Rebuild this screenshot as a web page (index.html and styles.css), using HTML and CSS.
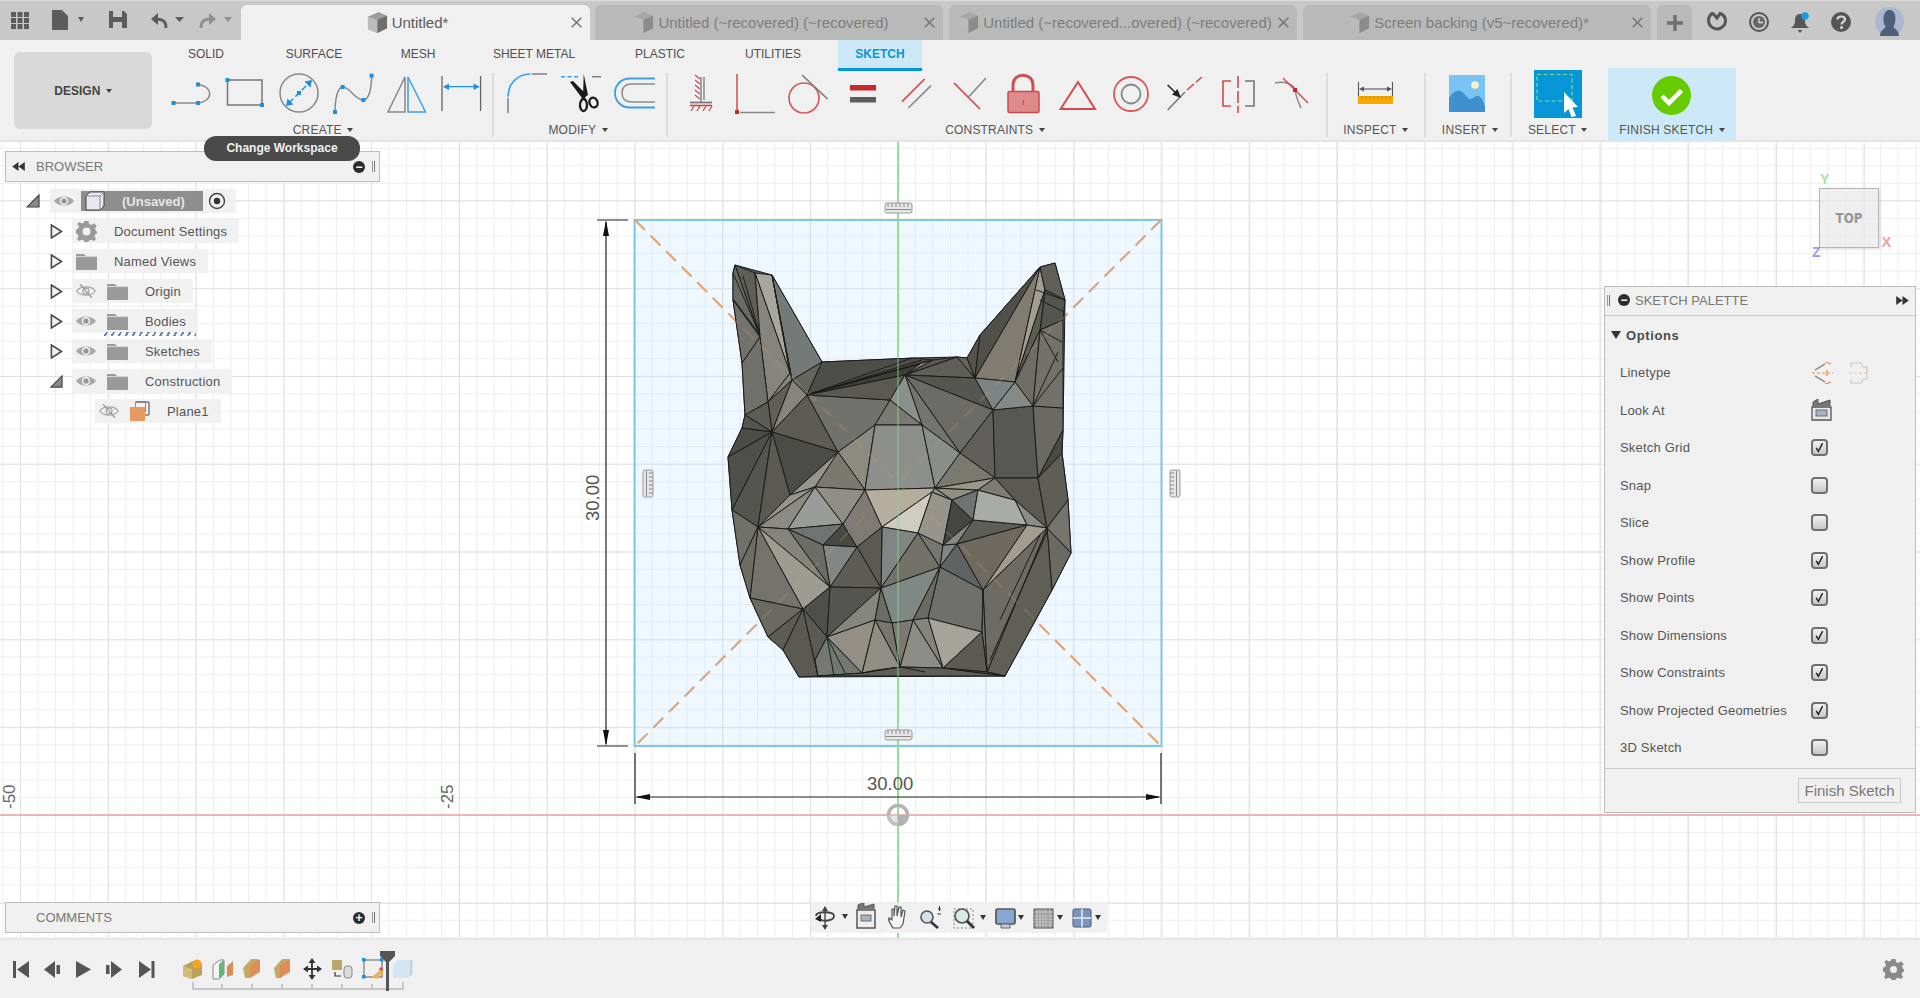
FILE: index.html
```html
<!DOCTYPE html>
<html lang="en">
<head>
  <meta charset="UTF-8">
  <title>Fusion 360 - Untitled*</title>
  <link rel="stylesheet" href="styles.css">
</head>
<body>
  <!-- shared icons -->
  <svg class="sprite" aria-hidden="true">
    <symbol id="eye" viewBox="0 0 20 14">
      <path d="M0 7C4 1 16 1 20 7C16 13 4 13 0 7Z" fill="#a8a8a8"/>
      <circle cx="10" cy="7" r="4.2" fill="#eee"/>
      <circle cx="10" cy="7" r="2.6" fill="#949494"/>
    </symbol>
    <symbol id="eye-off" viewBox="0 0 20 14">
      <path d="M0.8 7C4 1.5 16 1.5 19.2 7C16 12.5 4 12.5 0.8 7Z" fill="none" stroke="#a8a8a8" stroke-width="1.3"/>
      <circle cx="10" cy="7" r="3" fill="none" stroke="#a8a8a8" stroke-width="1.3"/>
      <path d="M4 0L16 14" stroke="#999" stroke-width="1.2"/>
    </symbol>
    <symbol id="folder" viewBox="0 0 21 17">
      <path d="M0 1H8L10 3H21V17H0Z" fill="#9a9a9a"/>
      <path d="M0 3.6H21" stroke="#eee" stroke-width="0.8"/>
    </symbol>
    <symbol id="tick" viewBox="0 0 17 17">
      <path d="M4.2 9L7 13.500L12.600 2.800" fill="none" stroke="#1c1c1c" stroke-width="1.800"/>
    </symbol>
    <symbol id="arrow-closed" viewBox="0 0 14 16">
      <path d="M1.5 1L12.5 8L1.5 15Z" fill="#f2f2f2" stroke="#4a4a4a" stroke-width="1.700"/>
    </symbol>
    <symbol id="arrow-open" viewBox="0 0 14 14">
      <path d="M13 1V13H1Z" fill="#8a8a8a" stroke="#444" stroke-width="1.2"/>
    </symbol>
    <symbol id="cube" viewBox="0 0 22 24">
      <path d="M1 6L12 1L21 5V18L11 23L1 19Z" fill="#9c9c9c"/>
      <path d="M1 6L11 9V23L1 19Z" fill="#bdbdbd"/>
      <path d="M11 9L21 5V18L11 23Z" fill="#6f6f6f"/>
    </symbol>
    <symbol id="cross" viewBox="0 0 11 11">
      <path d="M0.700 0.700L10.300 10.300M10.300 0.700L0.700 10.300" stroke="#777" stroke-width="1.600"/>
    </symbol>
  </svg>

  <header class="tabbar">
    <svg class="quick-icons" viewBox="0 5 241 35">
      <g fill="#5c5c5c">
        <rect x="11" y="12" width="5" height="5"/><rect x="17.500" y="12" width="5" height="5"/><rect x="24" y="12" width="5" height="5"/>
        <rect x="11" y="18" width="5" height="5"/><rect x="17.500" y="18" width="5" height="5"/><rect x="24" y="18" width="5" height="5"/>
        <rect x="11" y="24" width="5" height="5"/><rect x="17.500" y="24" width="5" height="5"/><rect x="24" y="24" width="5" height="5"/>
        <path d="M52 10H62L68 16V30H52Z"/>
        <path d="M78 17H84L81 22Z"/>
        <path d="M109 11H124L127 14V28H109ZM113 11V17H122V11ZM113 22V28H122V22Z" fill-rule="evenodd"/>
        <path d="M175 17H184L179.500 22Z"/>
      </g>
      <path d="M166 28C166 20 162 19 153 19" fill="none" stroke="#5c5c5c" stroke-width="3"/>
      <path d="M158 13L151 19L158 25Z" fill="#5c5c5c"/>
      <path d="M201 28C201 20 205 19 213 19" fill="none" stroke="#8f8f8f" stroke-width="3"/>
      <path d="M209 13L216 19L209 25Z" fill="#8f8f8f"/>
      <path d="M224 17H232L228 22Z" fill="#8f8f8f"/>
    </svg>
    <div class="doc-tab doc-tab-active">
      <svg class="tab-cube"><use href="#cube"/></svg>
      <span>Untitled*</span>
      <svg class="tab-close"><use href="#cross"/></svg>
    </div>
    <div class="doc-tab">
      <svg class="tab-cube"><use href="#cube"/></svg>
      <span>Untitled (~recovered) (~recovered)</span>
      <svg class="tab-close"><use href="#cross"/></svg>
    </div>
    <div class="doc-tab">
      <svg class="tab-cube"><use href="#cube"/></svg>
      <span>Untitled (~recovered...overed) (~recovered)</span>
      <svg class="tab-close"><use href="#cross"/></svg>
    </div>
    <div class="doc-tab">
      <svg class="tab-cube"><use href="#cube"/></svg>
      <span>Screen backing (v5~recovered)*</span>
      <svg class="tab-close"><use href="#cross"/></svg>
    </div>
    <div class="new-tab">
      <svg viewBox="0 0 18 18"><path d="M9 1V17M1 9H17" stroke="#6f6f6f" stroke-width="3.400"/></svg>
    </div>
    <svg class="account-icons" viewBox="1696 0 224 40">
      <path d="M1711 12.500A8.500 8.500 0 1 0 1724.500 20C1724.500 16 1722 13.500 1719 12.500L1716 17L1712.500 13Z" fill="none" stroke="#555" stroke-width="3"/>
      <circle cx="1758" cy="21" r="9" fill="none" stroke="#555" stroke-width="2"/>
      <circle cx="1758" cy="21" r="6" fill="#666"/>
      <path d="M1758 17V21.500H1762" fill="none" stroke="#ddd" stroke-width="1.300"/>
      <path d="M1799 13C1794 13 1794 18 1794 21C1794 24 1791 26 1790 27H1808C1807 26 1804 24 1804 21C1804 18 1804 13 1799 13ZM1796.500 29H1801.500L1799 32Z" fill="#555"/>
      <circle cx="1804" cy="15" r="3.800" fill="#1d9be0"/>
      <circle cx="1840" cy="21" r="10" fill="#555"/>
      <path d="M1836.500 18.500C1836.500 14.500 1844 14.500 1844 18.500C1844 21 1840.500 20.500 1840.500 23.500" fill="none" stroke="#d8d8d8" stroke-width="2.200"/>
      <circle cx="1840.500" cy="26.500" r="1.500" fill="#d8d8d8"/>
      <ellipse cx="1888.500" cy="20.500" rx="14.500" ry="14.500" fill="#a9b8d0"/>
      <path d="M1879 35C1879 29 1884 28 1884.500 25.500C1881 20 1882 9 1888.500 9C1895 9 1896 20 1892.500 25.500C1893 28 1898 29 1898 35Z" fill="#4f5f78"/>
    </svg>
  </header>

  <section class="ribbon">
    <button class="design-btn">DESIGN <i class="caret"></i></button>
    <div class="ribbon-main">
      <nav class="ribbon-tabs">
        <span>SOLID</span><span>SURFACE</span><span>MESH</span><span>SHEET METAL</span><span>PLASTIC</span><span>UTILITIES</span><span class="ribbon-tab-active">SKETCH</span>
      </nav>
      <div class="ribbon-groups">
        <div class="group group-sep">
          <div class="tools">
            <svg class="tool" viewBox="0 0 54 48">
              <path d="M9.500 33H34M34 14.500A13 9.300 0 0 1 34 33" fill="none" stroke="#8a8a8a" stroke-width="1.500"/>
              <g fill="#1d8fe0"><rect x="7.500" y="31" width="4" height="4"/><rect x="32" y="31" width="4" height="4"/><rect x="32" y="12.500" width="4" height="4"/></g>
            </svg>
            <svg class="tool" viewBox="0 0 54 48">
              <rect x="9.500" y="10" width="34.500" height="25" fill="none" stroke="#777" stroke-width="1.500"/>
              <g fill="#1d8fe0"><rect x="7.500" y="8" width="4" height="4"/><rect x="42" y="33" width="4" height="4"/></g>
            </svg>
            <svg class="tool" viewBox="0 0 54 48">
              <ellipse cx="27" cy="23" rx="19" ry="19" fill="none" stroke="#888" stroke-width="1.500"/>
              <path d="M17 33L37 13" stroke="#1d8fe0" stroke-width="1.500" stroke-dasharray="6 3"/>
              <path d="M14 36L15.500 28.500L21.500 34.500ZM40 10L38.500 17.500L32.500 11.500Z" fill="#1d8fe0"/>
              <rect x="25" y="21" width="4" height="4" fill="#1d8fe0"/>
            </svg>
            <svg class="tool" viewBox="0 0 54 48">
              <path d="M9 42C9 28 12 17 16.600 17C24 17 29 30 37.400 30C43 30 45.600 18 45.600 5.700" fill="none" stroke="#888" stroke-width="1.500"/>
              <g fill="#1d8fe0"><rect x="7" y="40" width="4" height="4"/><rect x="14.600" y="15" width="4" height="4"/><rect x="35.400" y="28" width="4" height="4"/><rect x="43.600" y="3.700" width="4" height="4"/></g>
            </svg>
            <svg class="tool" viewBox="0 0 54 48">
              <path d="M25 7L8 42H25Z" fill="none" stroke="#888" stroke-width="1.500"/>
              <path d="M28 7L45.500 42H28Z" fill="none" stroke="#3a9fe6" stroke-width="1.500"/>
            </svg>
            <svg class="tool" viewBox="0 0 54 48">
              <path d="M8 6V41M46.600 6V41" stroke="#666" stroke-width="1.300"/>
              <path d="M10 16.700H44.600" stroke="#1d8fe0" stroke-width="1.300"/>
              <path d="M9 16.700L15 13.500V20ZM45.600 16.700L39.600 13.500V20Z" fill="#1d8fe0"/>
            </svg>
          </div>
          <div class="group-label">CREATE <i class="caret"></i></div>
        </div>
        <div class="group group-sep">
          <div class="tools">
            <svg class="tool" viewBox="0 0 54 48">
              <path d="M8 26.700C8 14 17 4 30.600 4" fill="none" stroke="#3a9fe6" stroke-width="1.700"/>
              <path d="M32 4H47" stroke="#777" stroke-width="1.400"/>
              <path d="M8 28V43" stroke="#777" stroke-width="1.400"/>
            </svg>
            <svg class="tool" viewBox="0 0 54 48">
              <path d="M7 6.700H26" stroke="#3a9fe6" stroke-width="1.500" stroke-dasharray="4 2.500"/>
              <path d="M38 6.700H47" stroke="#777" stroke-width="1.400"/>
              <path d="M29.700 4L34 25L29 28ZM16 12L19 11L33 25L29.500 30Z" fill="#1a1a1a"/>
              <ellipse cx="29.500" cy="35" rx="3.500" ry="6" fill="none" stroke="#1a1a1a" stroke-width="2.300"/>
              <ellipse cx="39.500" cy="32.500" rx="4" ry="5" fill="none" stroke="#1a1a1a" stroke-width="2.300" transform="rotate(-20 39.500 32.500)"/>
            </svg>
            <svg class="tool" viewBox="0 0 54 48">
              <path d="M47 8.500H22C13 8.500 7 15 7 23C7 31 13 37.500 22 37.500H47" fill="none" stroke="#3a9fe6" stroke-width="1.800"/>
              <path d="M47 14H24C17 14 14 18 14 23C14 28 17 32 24 32H47" fill="none" stroke="#8a8a8a" stroke-width="1.500"/>
            </svg>
          </div>
          <div class="group-label">MODIFY <i class="caret"></i></div>
        </div>
        <div class="group group-sep group-constraints">
          <div class="tools">
            <svg class="tool" viewBox="0 0 54 48">
              <path d="M27 7V32M30 7V30" stroke="#777" stroke-width="1.300"/>
              <path d="M26 9L21 5M26 14L21 10M26 19L21 15M26 24L21 20M26 29L21 25" stroke="#c94a4a" stroke-width="1.200"/>
              <path d="M16 32.500H38" stroke="#777" stroke-width="1.700"/>
              <path d="M16 35.500H38" stroke="#c94a4a" stroke-width="1.600"/>
              <path d="M20 36L17 41M26 36L23 41M32 36L29 41M38 36L35 41" stroke="#c94a4a" stroke-width="1.200"/>
            </svg>
            <svg class="tool" viewBox="0 0 54 48">
              <path d="M9 4V40" stroke="#d34a4a" stroke-width="1.500"/>
              <rect x="7" y="40" width="4" height="4" fill="#c62828"/>
              <path d="M12 42.500H47" stroke="#888" stroke-width="1.500"/>
            </svg>
            <svg class="tool" viewBox="0 0 54 48">
              <ellipse cx="22" cy="28" rx="15" ry="15" fill="none" stroke="#d75a5a" stroke-width="1.700"/>
              <path d="M20 5L45.600 29" stroke="#777" stroke-width="1.500"/>
            </svg>
            <svg class="tool" viewBox="0 0 54 48">
              <rect x="14" y="15" width="26" height="5.500" fill="#c62828"/>
              <rect x="14" y="27" width="26" height="5.500" fill="#5e5e5e"/>
            </svg>
            <svg class="tool" viewBox="0 0 54 48">
              <path d="M12 31.700L34.700 9" stroke="#d34a4a" stroke-width="1.700"/>
              <path d="M18.400 38L41 15.700" stroke="#888" stroke-width="1.700"/>
            </svg>
            <svg class="tool" viewBox="0 0 54 48">
              <path d="M10 13L36 39" stroke="#d34a4a" stroke-width="1.700"/>
              <path d="M23.600 28L42 8" stroke="#888" stroke-width="1.700"/>
            </svg>
            <svg class="tool" viewBox="0 0 54 48">
              <path d="M15 22V15C15 2 35 2 35 15V22" fill="none" stroke="#cf5050" stroke-width="3"/>
              <rect x="10" y="21.500" width="31" height="21" rx="1.500" fill="#e08b8b" stroke="#c94a4a" stroke-width="1.500"/>
              <path d="M25.500 30V35" stroke="#c94a4a" stroke-width="1.200"/>
            </svg>
            <svg class="tool" viewBox="0 0 54 48">
              <path d="M26 12L8.600 39H43Z" fill="none" stroke="#d34a4a" stroke-width="2"/>
            </svg>
            <svg class="tool" viewBox="0 0 54 48">
              <circle cx="25" cy="24" r="17" fill="none" stroke="#d75a5a" stroke-width="1.800"/>
              <circle cx="25" cy="24" r="9.500" fill="none" stroke="#888" stroke-width="1.800"/>
            </svg>
            <svg class="tool" viewBox="0 0 54 48">
              <path d="M7.600 40L25 22" stroke="#777" stroke-width="1.500"/>
              <path d="M27 20L42 7" stroke="#d34a4a" stroke-width="1.500" stroke-dasharray="9 3"/>
              <path d="M7.600 15L17 24" stroke="#222" stroke-width="1.500"/>
              <path d="M21 28L12 24.500L17.500 19Z" fill="#222"/>
            </svg>
            <svg class="tool" viewBox="0 0 54 48">
              <path d="M17 11H9V36H17" fill="none" stroke="#d34a4a" stroke-width="1.600"/>
              <path d="M24 6V43" stroke="#d34a4a" stroke-width="1.600" stroke-dasharray="12 3"/>
              <path d="M31 11H40V36H31" fill="none" stroke="#777" stroke-width="1.600"/>
            </svg>
            <svg class="tool" viewBox="0 0 54 48">
              <path d="M7 13C16 11 26 14 27 20C28 27 30 31 33 38" fill="none" stroke="#888" stroke-width="1.500"/>
              <path d="M15 8L40 33" stroke="#d34a4a" stroke-width="1.500"/>
              <rect x="25" y="18" width="4" height="4" fill="#c62828"/>
            </svg>
          </div>
          <div class="group-label">CONSTRAINTS <i class="caret"></i></div>
        </div>
        <div class="group group-sep group-inspect">
          <svg class="tool-wide" viewBox="0 0 89 48">
            <path d="M27.500 12V26M61.500 12V26" stroke="#555" stroke-width="1.100"/>
            <path d="M30 19H59" stroke="#555" stroke-width="1.100"/>
            <path d="M28 19L33 16.500V21.500ZM61 19L56 16.500V21.500Z" fill="#555"/>
            <rect x="27" y="26" width="35" height="8" fill="#f7a900"/>
            <path d="M31 26V29M35 26V29M39 26V29M43 26V29M47 26V29M51 26V29M55 26V29M59 26V29" stroke="#b07800" stroke-width="0.800"/>
          </svg>
          <div class="group-label">INSPECT <i class="caret"></i></div>
        </div>
        <div class="group group-sep group-insert">
          <svg class="tool-wide" viewBox="0 0 76 48">
            <rect x="19" y="5" width="36" height="37" fill="#7cc3f5"/>
            <path d="M19 28C23 22 28 19 32 22C35 24 37 28 40 29C44 29 45 25 48 26C52 27 54 33 55 37V42H19Z" fill="#3f90cf"/>
            <circle cx="45" cy="15" r="3.800" fill="#f6f3c6"/>
          </svg>
          <div class="group-label">INSERT <i class="caret"></i></div>
        </div>
        <div class="group group-select">
          <svg class="tool-wide" viewBox="0 0 83 48">
            <rect x="18" y="0" width="48" height="48" fill="#0696d7"/>
            <rect x="21" y="4.500" width="35" height="26.500" fill="none" stroke="#7fe08a" stroke-width="1.200" stroke-dasharray="4 2.500"/>
            <path d="M48 22L62 37L56.500 37.500L60 46L55.500 47L52.500 39L48 43Z" fill="#fff"/>
          </svg>
          <div class="group-label">SELECT <i class="caret"></i></div>
        </div>
        <div class="group group-finish">
          <svg class="tool-wide" viewBox="0 0 128 48">
            <circle cx="63.500" cy="25.500" r="19.500" fill="#66cc00"/>
            <path d="M54 26L61 33L73.500 20.500" fill="none" stroke="#fff" stroke-width="4.500"/>
          </svg>
          <div class="group-label">FINISH SKETCH <i class="caret"></i></div>
        </div>
      </div>
    </div>
  </section>

  <main class="canvas">
    <svg class="scene" viewBox="0 142 1920 796">
      <rect x="634.500" y="220" width="527" height="526" class="sketch-face"/>
      <path class="axis-green" d="M898 142V938"/>
      <path class="axis-red" d="M0 815H1920"/>
      <path class="diag" d="M635 220L1161 746M1161 220L635 746"/>

      <!-- low poly cat head -->
      <polygon class="mesh-back" points="735,265 772,275 822,362 915,358 957,357 967,358 980,335 1040,267 1055,263 1065,300 1063,430 1062,453 1068,500 1071,553 1052,590 1005,676 799,677 783,650 768,637 750,598 740,565 732,510 728,457 742,428 745,415 742,363 733,300 733,273"/>
      <g class="mesh">
        <polygon points="735,265 755,273 760,337" fill="#5f5f58"/>
        <polygon points="733,273 735,265 760,337 733,300" fill="#6a6a64"/>
        <polygon points="733,300 760,337 742,363" fill="#73736d"/>
        <polygon points="755,273 772,275 790,373" fill="#a9a69b"/>
        <polygon points="755,273 790,373 768,402 760,337" fill="#85857d"/>
        <polygon points="772,275 822,362 792,380" fill="#737a78"/>
        <polygon points="772,275 792,380 790,373" fill="#737a78"/>
        <polygon points="760,337 768,402 745,415 742,363" fill="#71716b"/>
        <polygon points="768,402 790,373 792,380" fill="#85857d"/>
        <polygon points="792,380 768,402 772,432" fill="#5f5f58"/>
        <polygon points="792,380 807,395 772,432" fill="#87857c"/>
        <polygon points="792,380 822,362 807,395" fill="#65655e"/>
        <polygon points="768,402 745,415 772,432" fill="#5d5d56"/>
        <polygon points="745,415 742,428 772,432" fill="#55554f"/>
        <polygon points="742,428 728,457 772,432" fill="#4c4c46"/>
        <polygon points="728,457 772,432 732,510" fill="#4f4f49"/>
        <polygon points="772,432 758,527 732,510" fill="#55554f"/>
        <polygon points="772,432 838,452 807,395" fill="#5c5c55"/>
        <polygon points="807,395 838,452 875,425 890,400" fill="#72726c"/>
        <polygon points="772,432 838,452 790,495" fill="#4c4c46"/>
        <polygon points="772,432 790,495 758,527" fill="#5a5a53"/>
        <polygon points="822,362 915,358 933,360 807,395" fill="#4e4e48"/>
        <polygon points="807,395 933,360 905,375" fill="#9a988c"/>
        <polygon points="807,395 920,364 905,375 812,394" fill="#3f3f3a"/>
        <polygon points="807,395 905,375 890,400" fill="#5a5a53"/>
        <polygon points="933,360 957,357 905,375" fill="#5a5a53"/>
        <polygon points="905,375 957,357 975,378" fill="#5f5f58"/>
        <polygon points="957,357 967,358 975,378" fill="#66665f"/>
        <polygon points="905,375 975,378 993,410" fill="#565650"/>
        <polygon points="905,375 993,410 960,453" fill="#6c6c66"/>
        <polygon points="905,375 960,453 922,425" fill="#74746e"/>
        <polygon points="905,375 922,425 890,400" fill="#8b908d"/>
        <polygon points="890,400 922,425 875,425" fill="#7a7a72"/>
        <polygon points="838,452 875,425 865,490" fill="#8b8b82"/>
        <polygon points="875,425 922,425 935,488 865,490" fill="#8c8f8b"/>
        <polygon points="922,425 960,453 935,488" fill="#8a8e8b"/>
        <polygon points="960,453 993,410 995,478" fill="#605f59"/>
        <polygon points="960,453 995,478 935,488" fill="#7b7a70"/>
        <polygon points="993,410 1033,406 1038,478 995,478" fill="#585852"/>
        <polygon points="1033,406 1063,408 1063,430 1038,478" fill="#6a6a63"/>
        <polygon points="967,358 980,335 975,378" fill="#53534c"/>
        <polygon points="980,335 1040,267 975,378" fill="#514f4a"/>
        <polygon points="1040,267 1015,382 975,378" fill="#807c72"/>
        <polygon points="1040,267 1045,290 1015,382" fill="#a19e92"/>
        <polygon points="1040,267 1055,263 1065,300 1045,290" fill="#5f5f58"/>
        <polygon points="1045,290 1065,300 1063,320 1040,330" fill="#555550"/>
        <polygon points="1045,290 1040,330 1015,382" fill="#5c5c55"/>
        <polygon points="1015,382 1040,330 1033,406" fill="#6d6d66"/>
        <polygon points="1040,330 1063,320 1063,408 1033,406" fill="#72726b"/>
        <polygon points="975,378 1015,382 993,410" fill="#7c8583"/>
        <polygon points="1015,382 1033,406 993,410" fill="#858a87"/>
        <polygon points="1063,430 1062,453 1038,478" fill="#4a4a44"/>
        <polygon points="838,452 865,490 815,487" fill="#7a7970"/>
        <polygon points="838,452 815,487 790,495" fill="#96968d"/>
        <polygon points="790,495 815,487 758,527" fill="#94948d"/>
        <polygon points="758,527 815,487 788,529" fill="#8b8b84"/>
        <polygon points="815,487 843,524 788,529" fill="#9a9c9a"/>
        <polygon points="815,487 865,490 843,524" fill="#8f8f88"/>
        <polygon points="843,524 857,547 823,545" fill="#494944"/>
        <polygon points="788,529 843,524 823,545" fill="#6e7471"/>
        <polygon points="865,490 882,527 857,547 843,524" fill="#7d7b73"/>
        <polygon points="865,490 935,488 932,492 882,527" fill="#b5ad9e"/>
        <polygon points="882,527 932,492 918,533" fill="#cfccc4"/>
        <polygon points="882,527 918,533 881,588" fill="#7f8683"/>
        <polygon points="857,547 882,527 881,588" fill="#5a5a52"/>
        <polygon points="830,587 857,547 881,588" fill="#5d5d56"/>
        <polygon points="823,545 857,547 830,587" fill="#818785"/>
        <polygon points="788,529 823,545 830,587" fill="#6c6c66"/>
        <polygon points="758,527 788,529 830,587" fill="#85847c"/>
        <polygon points="758,527 830,587 803,609" fill="#9d9c92"/>
        <polygon points="758,527 803,609 750,598" fill="#74746d"/>
        <polygon points="732,510 758,527 740,565" fill="#71716a"/>
        <polygon points="740,565 758,527 750,598" fill="#6c6c65"/>
        <polygon points="750,598 803,609 768,637" fill="#6a6a63"/>
        <polygon points="768,637 803,609 783,650" fill="#5c5c55"/>
        <polygon points="783,650 803,609 818,676 799,677" fill="#5a5a53"/>
        <polygon points="803,609 830,587 827,637" fill="#4f4f49"/>
        <polygon points="803,609 827,637 815,660 818,676" fill="#5b5b54"/>
        <polygon points="830,587 881,588 827,637" fill="#55554f"/>
        <polygon points="881,588 875,620 827,637" fill="#85877f"/>
        <polygon points="881,588 892,623 875,620" fill="#6c6c65"/>
        <polygon points="881,588 940,567 913,620 892,623" fill="#7f8885"/>
        <polygon points="881,588 918,533 940,567" fill="#72726a"/>
        <polygon points="918,533 943,545 940,567" fill="#767670"/>
        <polygon points="943,545 957,544 940,567" fill="#7f8884"/>
        <polygon points="932,492 952,500 943,545 918,533" fill="#96958b"/>
        <polygon points="935,488 952,500 932,492" fill="#8f8f84"/>
        <polygon points="935,488 978,490 952,500" fill="#8f8f84"/>
        <polygon points="935,488 995,478 978,490" fill="#98978a"/>
        <polygon points="952,500 973,520 943,545" fill="#454541"/>
        <polygon points="973,520 957,544 943,545" fill="#7f8884"/>
        <polygon points="973,520 1027,525 957,544" fill="#5e5e58"/>
        <polygon points="952,500 978,490 973,520" fill="#6d7472"/>
        <polygon points="978,490 1015,500 1027,525 973,520" fill="#a9aba7"/>
        <polygon points="978,490 995,478 1015,500" fill="#7d7c74"/>
        <polygon points="995,478 1038,478 1047,528 1015,500" fill="#5a5a53"/>
        <polygon points="1015,500 1047,528 1027,525" fill="#8c8c86"/>
        <polygon points="940,567 957,544 983,590" fill="#5f6462"/>
        <polygon points="957,544 1027,525 983,590" fill="#6f6a5f"/>
        <polygon points="1027,525 1047,528 983,590" fill="#a19d90"/>
        <polygon points="940,567 983,590 982,632 928,618" fill="#6f706b"/>
        <polygon points="1047,528 1038,478 1062,453 1068,500" fill="#5e5e57"/>
        <polygon points="1047,528 1068,500 1071,553" fill="#74746d"/>
        <polygon points="1047,528 1071,553 1052,590" fill="#6a6a63"/>
        <polygon points="1047,528 1052,590 1005,676 987,672" fill="#5f5f58"/>
        <polygon points="983,590 1047,528 987,672" fill="#6c6c65"/>
        <polygon points="940,567 928,618 913,620" fill="#6a6a63"/>
        <polygon points="982,632 983,590 987,672" fill="#70706a"/>
        <polygon points="928,618 982,632 943,668" fill="#a5a49b"/>
        <polygon points="982,632 987,672 943,668" fill="#5b5b54"/>
        <polygon points="913,620 928,618 943,668" fill="#85857e"/>
        <polygon points="913,620 943,668 900,667" fill="#8d8d87"/>
        <polygon points="892,623 913,620 900,667" fill="#7a7a73"/>
        <polygon points="875,620 892,623 900,667" fill="#77776f"/>
        <polygon points="875,620 900,667 862,673" fill="#8f8e85"/>
        <polygon points="827,637 875,620 862,673" fill="#948f84"/>
        <polygon points="827,637 862,673 818,676 815,660" fill="#747872"/>
        <polygon points="862,673 900,667 943,668 1005,676 818,676" fill="#5e5e58"/>
        <polygon points="943,668 987,672 1005,676" fill="#55554f"/>
        <!-- thin slivers that only read as lines -->
        <path d="M733 273L760 335M734 300L760 335M743 276L760 335M807 395L912 358M807 395L922 360M812 393L928 361M1036 290L1065 300M1040 300L1064 312M1040 330L1062 342M1040 330L1058 362M1033 406L1058 352M1033 406L1063 368M1048 530L990 660M1040 535L1000 620M827 637L845 673M827 637L834 676M900 667L877 670L862 673M900 667L925 672"/>
      </g>
      <path class="diag diag-over" d="M635 220L1161 746M1161 220L635 746"/>
      <path class="axis-green axis-over" d="M898 142V938"/>

      <!-- side handles of the sketch plane -->
      <g class="handles">
        <g transform="translate(885 203)"><rect width="27" height="10" rx="2"/><path d="M3 0V4M7 0V4M11 0V4M15 0V4M19 0V4M23 0V4M1 6.500H26"/></g>
        <g transform="translate(885 730)"><rect width="27" height="10" rx="2"/><path d="M3 0V4M7 0V4M11 0V4M15 0V4M19 0V4M23 0V4M1 6.500H26"/></g>
        <g transform="translate(643 470)"><rect width="10" height="27" rx="2"/><path d="M6 3H10M6 7H10M6 11H10M6 15H10M6 19H10M6 23H10M3.500 1V26"/></g>
        <g transform="translate(1170 470)"><rect width="10" height="27" rx="2"/><path d="M0 3H4M0 7H4M0 11H4M0 15H4M0 19H4M0 23H4M6.500 1V26"/></g>
      </g>

      <!-- dimensions -->
      <g class="dims">
        <path d="M597 220H628M597 746H628M606 222V744"/>
        <path d="M635 753V804M1161 753V804M637 797H1159"/>
        <path class="arrow" d="M606 220L603 236H609ZM606 746L603 730H609ZM635 797L650 794V800ZM1161 797L1146 794V800Z"/>
      </g>
      <text class="dim-text" x="867" y="790">30.00</text>
      <text class="dim-text" x="599" y="521" transform="rotate(-90 599 521)">30.00</text>
      <text class="axis-num" x="15" y="809" transform="rotate(-90 15 809)">-50</text>
      <text class="axis-num" x="453" y="809" transform="rotate(-90 453 809)">-25</text>

      <!-- origin -->
      <circle cx="898" cy="815" r="9.500" fill="none" stroke="#b3b3b3" stroke-width="3.500"/>
      <path d="M898 815H908.500A10.500 10.500 0 0 1 898 825.500Z" fill="#b3b3b3"/>
      <path d="M887 815A11 11 0 0 0 898 826V815Z" fill="#ccc" opacity="0.500"/>
    </svg>

    <aside class="panel browser-panel">
      <svg class="panel-arrows" viewBox="0 0 14 10"><path d="M7 0V10L0 5ZM14 0V10L7 5Z"/></svg>
      <span class="panel-title">BROWSER</span>
      <span class="panel-toggle">&minus;</span>
      <i class="grip"></i>
    </aside>

    <div class="tree">
      <div class="tree-row">
        <svg class="tree-arrow-root"><use href="#arrow-open"/></svg>
        <div class="tree-body tree-root">
          <svg class="ico-eye"><use href="#eye"/></svg>
          <div class="root-chip">
            <svg class="root-cube" viewBox="0 0 20 20"><path d="M1 5L5 1H19V15L15 19H1Z" fill="#e8e8ee" stroke="#444" stroke-width="1"/><path d="M15 5V19M1 5H15L19 1" fill="none" stroke="#8a8a8a" stroke-width="1"/></svg>
            <span>(Unsaved)</span>
          </div>
          <svg class="root-radio" viewBox="0 0 18 18"><circle cx="9" cy="9" r="7.500" fill="none" stroke="#444" stroke-width="1.400"/><circle cx="9" cy="9" r="3.200" fill="#333"/></svg>
        </div>
      </div>
      <div class="tree-row depth-1">
        <svg class="tree-arrow"><use href="#arrow-closed"/></svg>
        <div class="tree-body">
          <svg class="ico-gear" viewBox="0 0 21 21"><path fill="#9a9a9a" fill-rule="evenodd" d="M8.500 0H12.500L13 3L15.500 4L18 2.300L20.700 5L19 7.500L20 10L21 10.500V12.500L19.500 13L18.500 15.500L20 18L18 20L15.500 18.700L13 19.500L12.500 21H8.500L8 19.500L5.500 18.700L3 20L1 18L2.500 15.500L1.500 13L0 12.500V8.500L2 8L3 5.500L1.300 3L3.500 1L6 2.500L8 1.500ZM10.500 6.500A4 4 0 1 0 10.500 14.500A4 4 0 1 0 10.500 6.500Z"/></svg>
          <span class="tree-label">Document Settings</span>
        </div>
      </div>
      <div class="tree-row depth-1">
        <svg class="tree-arrow"><use href="#arrow-closed"/></svg>
        <div class="tree-body">
          <svg class="ico-folder"><use href="#folder"/></svg>
          <span class="tree-label">Named Views</span>
        </div>
      </div>
      <div class="tree-row depth-1">
        <svg class="tree-arrow"><use href="#arrow-closed"/></svg>
        <div class="tree-body">
          <svg class="ico-eye"><use href="#eye-off"/></svg>
          <svg class="ico-folder"><use href="#folder"/></svg>
          <span class="tree-label">Origin</span>
        </div>
      </div>
      <div class="tree-row depth-1">
        <svg class="tree-arrow"><use href="#arrow-closed"/></svg>
        <div class="tree-body has-warning">
          <svg class="ico-eye"><use href="#eye"/></svg>
          <svg class="ico-folder"><use href="#folder"/></svg>
          <span class="tree-label">Bodies</span>
        </div>
      </div>
      <div class="tree-row depth-1">
        <svg class="tree-arrow"><use href="#arrow-closed"/></svg>
        <div class="tree-body">
          <svg class="ico-eye"><use href="#eye"/></svg>
          <svg class="ico-folder"><use href="#folder"/></svg>
          <span class="tree-label">Sketches</span>
        </div>
      </div>
      <div class="tree-row depth-1">
        <svg class="tree-arrow"><use href="#arrow-open"/></svg>
        <div class="tree-body">
          <svg class="ico-eye"><use href="#eye"/></svg>
          <svg class="ico-folder"><use href="#folder"/></svg>
          <span class="tree-label">Construction</span>
        </div>
      </div>
      <div class="tree-row depth-2">
        <div class="tree-body">
          <svg class="ico-eye"><use href="#eye-off"/></svg>
          <svg class="ico-plane" viewBox="0 0 20 20"><path d="M6 1H19V14H14" fill="none" stroke="#444" stroke-width="1"/><rect x="5.500" y="1" width="10" height="10" fill="none" stroke="#666" stroke-width="0.700"/><rect x="0" y="6" width="15" height="14" fill="#e59a62"/></svg>
          <span class="tree-label">Plane1</span>
        </div>
      </div>
    </div>

    <div class="tooltip">Change Workspace</div>

    <!-- view cube -->
    <div class="viewcube">
      <span class="axis-y">Y</span>
      <span class="axis-x">X</span>
      <span class="axis-z">Z</span>
      <span class="cube-face">TOP</span>
    </div>

    <aside class="palette">
      <div class="palette-head">
        <i class="grip"></i>
        <span class="panel-toggle">&minus;</span>
        <span class="panel-title">SKETCH PALETTE</span>
        <svg class="panel-arrows" viewBox="0 0 14 10"><path d="M0 0V10L7 5ZM7 0V10L14 5Z"/></svg>
      </div>
      <div class="palette-section"><i class="section-arrow"></i>Options</div>
      <div class="palette-row">
        <span>Linetype</span>
        <svg class="ltype" viewBox="0 0 60 22">
          <path d="M1 11H22" stroke="#e98a3c" stroke-width="1.200" stroke-dasharray="3 2"/>
          <path d="M14 2L4 8M14 20L4 14" stroke="#777" stroke-width="1.200"/>
          <path d="M14 0L20 2M14 22L20 20M16 8V14" stroke="#e98a3c" stroke-width="1.200"/>
          <path d="M40 5V1H50L52 5H56V17H52L50 21H40V17" fill="none" stroke="#c8c8c8" stroke-width="1.200"/>
          <path d="M38 11H58" stroke="#eebc95" stroke-width="1.200" stroke-dasharray="3 2"/>
        </svg>
      </div>
      <div class="palette-row">
        <span>Look At</span>
        <svg class="ltype" viewBox="0 0 60 22">
          <path d="M1 8H20V21H1Z" fill="#e8e8e8" stroke="#555" stroke-width="1.300"/>
          <path d="M2 8V3L7 0V5L19 1V7" fill="#777" stroke="#555" stroke-width="1"/>
          <rect x="5" y="11" width="11" height="6" fill="#aab3c6" stroke="#555" stroke-width="0.800"/>
        </svg>
      </div>
      <div class="palette-row"><span>Sketch Grid</span><i class="check"><svg><use href="#tick"/></svg></i></div>
      <div class="palette-row"><span>Snap</span><i class="check"></i></div>
      <div class="palette-row"><span>Slice</span><i class="check"></i></div>
      <div class="palette-row"><span>Show Profile</span><i class="check"><svg><use href="#tick"/></svg></i></div>
      <div class="palette-row"><span>Show Points</span><i class="check"><svg><use href="#tick"/></svg></i></div>
      <div class="palette-row"><span>Show Dimensions</span><i class="check"><svg><use href="#tick"/></svg></i></div>
      <div class="palette-row"><span>Show Constraints</span><i class="check"><svg><use href="#tick"/></svg></i></div>
      <div class="palette-row"><span>Show Projected Geometries</span><i class="check"><svg><use href="#tick"/></svg></i></div>
      <div class="palette-row"><span>3D Sketch</span><i class="check"></i></div>
      <div class="palette-foot"><button class="finish-btn">Finish Sketch</button></div>
    </aside>

    <aside class="panel comments-panel">
      <span class="panel-title">COMMENTS</span>
      <span class="panel-toggle">+</span>
      <i class="grip"></i>
    </aside>

    <svg class="navbar" viewBox="811 903 296 30">
      <path d="M825 907V925" stroke="#555" stroke-width="1.500"/>
      <path d="M825 906L822 911H828ZM825 930L822 925H828Z" fill="#444"/>
      <path d="M816 916C816 911 834 911 834 916C834 921 822 922 820 919" fill="none" stroke="#444" stroke-width="1.800"/>
      <path d="M815 919L821 914V922Z" fill="#222"/>
      <path d="M842 914H848L845 919Z" fill="#333"/>
      <path d="M857 910H875V928H857Z" fill="#eee" stroke="#555" stroke-width="1.500"/>
      <path d="M858 910V905L864 902V907L874 904V909" fill="#777" stroke="#555"/>
      <rect x="861" y="915" width="10" height="6" fill="#aab3c6" stroke="#555" stroke-width="0.800"/>
      <path d="M893 928C889 922 888 920 889 918L892 920V909L894 909V916L895 906L897 906V916L899 907L901 907V917L903 910L905 911L903 924L900 928Z" fill="#f5f5f5" stroke="#555" stroke-width="1.200"/>
      <circle cx="927" cy="917" r="6" fill="#d3e3e8" stroke="#555" stroke-width="1.600"/>
      <path d="M931 922L938 928" stroke="#333" stroke-width="2.600"/>
      <path d="M938 909H941M939.500 906V911M937.500 914H941" stroke="#333" stroke-width="1"/>
      <rect x="954" y="909" width="19" height="19" fill="none" stroke="#888" stroke-dasharray="2 2"/>
      <circle cx="962" cy="916" r="7" fill="#d9e9e8" stroke="#555" stroke-width="1.700"/>
      <path d="M967 921L974 928" stroke="#333" stroke-width="2.800"/>
      <path d="M980 915H986L983 920Z" fill="#333"/>
      <rect x="996" y="909" width="19" height="15" rx="1.500" fill="#86a8d2" stroke="#555" stroke-width="1.700"/>
      <path d="M1001 928H1010V924H1001Z" fill="#ccc" stroke="#666"/>
      <path d="M1018 915H1024L1021 920Z" fill="#333"/>
      <rect x="1034" y="909" width="19" height="19" fill="#999" stroke="#555"/>
      <path d="M1037 909V928M1040 909V928M1043 909V928M1046 909V928M1050 909V928M1034 912H1053M1034 916H1053M1034 919H1053M1034 922H1053M1034 925H1053" stroke="#ddd" stroke-width="0.600"/>
      <path d="M1057 915H1063L1060 920Z" fill="#333"/>
      <rect x="1073" y="909" width="18" height="18" rx="1.500" fill="#7a94bd" stroke="#4a5a70"/>
      <path d="M1073 918H1091M1082 909V927" stroke="#e8eef5" stroke-width="1.500"/>
      <path d="M1095 915H1101L1098 920Z" fill="#333"/>
    </svg>
  </main>

  <footer class="timeline">
    <svg class="timeline-strip" viewBox="0 938 420 60">
      <g fill="#555">
        <rect x="13" y="961" width="3" height="17"/><path d="M29 961V978L17 969.500Z"/>
        <path d="M55 961V978L44 969.500Z"/><rect x="56.500" y="965" width="3.500" height="9"/>
        <path d="M76 961L91 969.500L76 978Z"/>
        <rect x="106" y="965" width="3.500" height="9"/><path d="M111 961L122 969.500L111 978Z"/>
        <path d="M139 961L151 969.500L139 978Z"/><rect x="151.500" y="961" width="3" height="17"/>
      </g>
      <path d="M193 982V989H403V982M222 984V989M252 984V989M282 984V989M312 984V989M342 984V989M372 984V989" fill="none" stroke="#c6c6c6" stroke-width="2"/>
      <path d="M183 966L193 961L202 964V975L192 979L183 976Z" fill="#b9a15a"/>
      <path d="M183 966L192 969V979L183 976Z" fill="#d3bc78"/>
      <circle cx="197" cy="964" r="4.500" fill="#f5a623"/>
      <path d="M213 979V965L220 960H224V974L219 979Z" fill="#f4f4f4" stroke="#888"/>
      <path d="M219 964L224 960V974L219 979Z" fill="#5dbb73"/>
      <path d="M227 966L233 961V975L227 977Z" fill="#d98e58"/>
      <path d="M243 968L251 959H258V964L250 978H245Z" fill="#c3aa62"/>
      <path d="M250 965L260 959V972L250 978Z" fill="#dd8e58"/>
      <path d="M274 968L282 959H289V964L281 978H276Z" fill="#c3aa62"/>
      <path d="M280 965L290 959V972L280 978Z" fill="#dd8e58"/>
      <path d="M312 961V977M304 969H321" stroke="#333" stroke-width="1.800"/>
      <path d="M312 958L308.500 963H315.500ZM312 980L308.500 975H315.500ZM303 969L308 965.500V972.500ZM322 969L317 965.500V972.500Z" fill="#333"/>
      <path d="M332 960H342V970H332Z" fill="#bca668"/>
      <rect x="344" y="966" width="8" height="12" rx="3" fill="#ddd" stroke="#888"/>
      <path d="M335 972V976H341" fill="none" stroke="#333" stroke-width="1.200"/>
      <rect x="364" y="960" width="18" height="17" fill="none" stroke="#777" stroke-width="1.200"/>
      <g fill="#1d8fe0"><rect x="362" y="958" width="3.500" height="3.500"/><rect x="380" y="958" width="3.500" height="3.500"/><rect x="362" y="975" width="3.500" height="3.500"/></g>
      <path d="M372 977L381 969L384 972L376 979Z" fill="#e9b64c"/>
      <circle cx="381" cy="969" r="1.800" fill="#e04a4a"/>
      <path d="M393 965L398 960H413V973L408 978H393Z" fill="#cfe3f2" opacity="0.900"/>
      <path d="M411 960V976" stroke="#bbb" stroke-width="1"/>
      <path d="M380 951H395V956L389 962V991H386V962L380 956Z" fill="#555"/>
    </svg>
    <svg class="gear" viewBox="0 0 21 21"><path fill="#8a8a8a" fill-rule="evenodd" d="M8.500 0H12.500L13 3L15.500 4L18 2.300L20.700 5L19 7.500L20 10L21 10.500V12.500L19.500 13L18.500 15.500L20 18L18 20L15.500 18.700L13 19.500L12.500 21H8.500L8 19.500L5.500 18.700L3 20L1 18L2.500 15.500L1.500 13L0 12.500V8.500L2 8L3 5.500L1.300 3L3.500 1L6 2.500L8 1.500ZM10.500 7A3.500 3.500 0 1 0 10.500 14A3.500 3.500 0 1 0 10.500 7Z"/></svg>
  </footer>
</body>
</html>
```

FILE: styles.css
```css
* {
  box-sizing: border-box;
}
body, html {
  margin: 0;
  padding: 0;
  width: 100%;
  height: 100%;
  overflow: hidden;
  font-family: "Liberation Sans", Arial, sans-serif;
  color: #555;
}
body {
  display: flex;
  flex-direction: column;
  background-color: #f0f0f0;
}
.sprite {
  position: absolute;
  width: 0;
  height: 0;
}
svg {
  display: block;
}

/* document tabs */
.tabbar {
  height: 40px;
  flex: none;
  display: flex;
  align-items: flex-end;
  background-color: #c8c8c8;
  border-top: 1px solid #dcdcdc;
}
.quick-icons {
  width: 241px;
  height: 35px;
  flex: none;
}
.doc-tab {
  position: relative;
  width: 348px;
  height: 35px;
  flex: none;
  margin-right: 6px;
  padding-right: 16px;
  display: flex;
  align-items: center;
  justify-content: center;
  gap: 4px;
  border-radius: 6px 6px 0 0;
  background-color: #b9b9b9;
  font-size: 15px;
  color: #7d7d7d;
  white-space: nowrap;
}
.doc-tab-active {
  width: 349px;
  margin-right: 5px;
  background-color: #f0f0f0;
  color: #5a5a5a;
}
.tab-cube {
  width: 21px;
  height: 23px;
  flex: none;
  opacity: 0.6;
}
.doc-tab-active .tab-cube {
  opacity: 1;
}
.tab-close {
  position: absolute;
  right: 8px;
  top: 12px;
  width: 11px;
  height: 11px;
}
.new-tab {
  width: 35px;
  height: 35px;
  flex: none;
  display: flex;
  align-items: center;
  justify-content: center;
  border-radius: 6px 6px 0 0;
  background-color: #b9b9b9;
}
.new-tab svg {
  width: 18px;
  height: 18px;
}
.account-icons {
  width: 224px;
  height: 40px;
  flex: none;
  margin-left: 5px;
  margin-bottom: -1px;
}

/* ribbon */
.ribbon {
  height: 102px;
  flex: none;
  display: flex;
  padding-left: 14px;
  background-color: #f0f0f0;
  border-bottom: 2px solid #e4e4e4;
}
.design-btn {
  width: 138px;
  height: 77px;
  margin-top: 12px;
  flex: none;
  border: 0;
  border-radius: 6px;
  background-color: #d9d9d9;
  font-family: inherit;
  font-size: 12px;
  font-weight: bold;
  color: #444;
}
.caret {
  display: inline-block;
  margin-left: 2px;
  vertical-align: 2px;
  border-left: 3.5px solid transparent;
  border-right: 3.5px solid transparent;
  border-top: 4px solid #444;
}
.ribbon-main {
  margin-left: 12px;
  display: flex;
  flex-direction: column;
}
.ribbon-tabs {
  height: 30px;
  display: grid;
  grid-template-columns: 84px 132px 76px 156px 96px 130px 84px;
  font-size: 12px;
  line-height: 28px;
  text-align: center;
  color: #4f4f4f;
}
.ribbon-tab-active {
  height: 31px;
  background-color: #cde9f7;
  border-bottom: 3px solid #0696d7;
  font-weight: bold;
  color: #0696d7;
}
.ribbon-groups {
  display: flex;
  height: 72px;
}
.group {
  display: flex;
  flex-direction: column;
  flex: none;
  position: relative;
}
.group-sep {
  margin-right: 12px;
}
.group-sep::after {
  content: "";
  position: absolute;
  right: -6px;
  top: 3px;
  width: 2px;
  height: 64px;
  background-color: #dcdcdc;
}
.tools {
  display: flex;
  height: 48px;
}
.tool {
  width: 54px;
  height: 48px;
  flex: none;
}
.tool-wide {
  height: 48px;
}
.group-label {
  height: 24px;
  font-size: 12px;
  letter-spacing: 0.2px;
  line-height: 24px;
  text-align: center;
  color: #555;
  white-space: nowrap;
}
.tools + .group-label {
  padding-right: 6px;
}
.group-inspect {
  width: 89px;
  margin-left: -3px;
  margin-right: 10px;
}
.group-insert {
  width: 76px;
  margin-right: 10px;
}
.group-insert .group-label {
  padding-left: 4px;
}
.group-select {
  width: 83px;
  margin-right: 9px;
}
.group-finish {
  width: 128px;
  margin-top: -2px;
  height: 74px;
  background-color: #cde9f7;
}
.group-finish .tool-wide {
  margin-top: 2px;
}

/* canvas */
.canvas {
  position: relative;
  flex: 1;
  min-height: 0;
  background-color: #fff;
  background-image:
    linear-gradient(to right, #e1e1e1 1px, transparent 1px),
    linear-gradient(to bottom, #e1e1e1 1px, transparent 1px),
    linear-gradient(to right, #eeeeee 1px, transparent 1px),
    linear-gradient(to bottom, #eeeeee 1px, transparent 1px);
  background-size: 87.8px 87.8px, 87.8px 87.8px, 17.56px 17.56px, 17.56px 17.56px;
  background-position: 20px 0, 0 58.4px, 2.44px 0, 0 5.72px;
}
.scene {
  width: 1920px;
  height: 796px;
}
.sketch-face {
  fill: rgba(190, 226, 250, 0.24);
  stroke: #7cc7ea;
  stroke-width: 2;
}
.axis-green {
  stroke: #86dd86;
  stroke-width: 1.4;
}
.axis-over {
  opacity: 0.6;
}
.axis-red {
  stroke: #eea3a3;
  stroke-width: 1.4;
}
.diag {
  stroke: #e0a272;
  stroke-width: 2;
  stroke-dasharray: 14 8;
}
.diag-over {
  opacity: 0.2;
}
.mesh-back {
  fill: #5e5e58;
  stroke: #1b1b1b;
  stroke-width: 1;
}
.mesh polygon, .mesh path {
  stroke: #1b1b1b;
  stroke-width: 1;
  stroke-linejoin: round;
}
.mesh path {
  fill: none;
}
.handles rect {
  fill: #e6e6e6;
  stroke: #9a9a9a;
}
.handles path {
  fill: none;
  stroke: #8a8a8a;
}
.dims path {
  fill: none;
  stroke: #222;
  stroke-width: 1.2;
}
.dims .arrow {
  fill: #111;
  stroke: none;
}
.dim-text {
  font-size: 18.5px;
  fill: #555;
}
.axis-num {
  font-size: 17px;
  fill: #666;
}

/* floating panels */
.panel {
  position: absolute;
  left: 5px;
  width: 375px;
  height: 31px;
  display: flex;
  align-items: center;
  padding: 0 4px 0 6px;
  background-color: #f0f0f0;
  border: 1px solid #bdbdbd;
}
.browser-panel {
  top: 9px;
}
.comments-panel {
  top: 760px;
  padding-left: 30px;
}
.panel-title {
  font-size: 13px;
  color: #777;
}
.panel-arrows {
  width: 13px;
  height: 9px;
  fill: #333;
  flex: none;
}
.browser-panel .panel-title {
  margin-left: 11px;
}
.panel-toggle {
  width: 12px;
  height: 12px;
  margin-left: auto;
  flex: none;
  border-radius: 50%;
  background-color: #2c2c2c;
  color: #fff;
  font-size: 12px;
  font-weight: bold;
  line-height: 12px;
  text-align: center;
}
.grip {
  width: 3px;
  height: 11px;
  margin-left: 7px;
  flex: none;
  border-left: 1px solid #999;
  border-right: 1px solid #777;
}

/* browser tree */
.tree {
  position: absolute;
  left: 0;
  top: 47px;
  display: flex;
  flex-direction: column;
  gap: 6px;
  padding-left: 26px;
  font-size: 13px;
}
.tree-row {
  height: 24px;
  display: flex;
  align-items: center;
}
.depth-1 {
  padding-left: 24px;
}
.depth-2 {
  padding-left: 69px;
}
.tree-arrow-root {
  width: 14px;
  height: 14px;
  margin-right: 10px;
  flex: none;
}
.tree-arrow {
  width: 13px;
  height: 15px;
  margin-right: 9px;
  flex: none;
}
.tree-body {
  position: relative;
  height: 24px;
  display: flex;
  align-items: center;
  padding: 0 12px 0 4px;
  background-color: rgba(240, 240, 240, 0.92);
}
.tree-root {
  padding: 0 10px 0 4px;
}
.tree-label {
  margin-left: 17px;
  letter-spacing: 0.2px;
  color: #555;
}
.ico-eye {
  width: 20px;
  height: 14px;
  margin-right: 11px;
  flex: none;
}
.ico-folder {
  width: 21px;
  height: 17px;
  flex: none;
}
.ico-gear {
  width: 21px;
  height: 21px;
  flex: none;
}
.ico-plane {
  width: 20px;
  height: 20px;
  flex: none;
}
.has-warning::after {
  content: "";
  position: absolute;
  left: 31px;
  right: 2px;
  bottom: -3px;
  height: 4px;
  background-image: repeating-linear-gradient(-60deg, #6c86b0 0 2px, transparent 2px 6px);
}
.ico-eye + .root-chip {
  margin-left: -4px;
}
.root-chip {
  width: 122px;
  height: 20px;
  display: flex;
  align-items: center;
  padding-left: 4px;
  background-color: #8e8e8e;
  color: #e6e6e6;
  font-weight: bold;
}
.root-cube {
  width: 20px;
  height: 20px;
  flex: none;
}
.root-chip span {
  margin-left: 17px;
}
.root-radio {
  width: 18px;
  height: 18px;
  margin-left: 5px;
  flex: none;
}

.tooltip {
  position: absolute;
  left: 204px;
  top: -6px;
  width: 156px;
  height: 25px;
  border-radius: 12px;
  background-color: #4a4a4a;
  color: #f2f2f2;
  font-size: 12px;
  font-weight: bold;
  line-height: 25px;
  text-align: center;
}

/* view cube */
.viewcube {
  position: absolute;
  left: 1819px;
  top: 46px;
  width: 60px;
  height: 60px;
  background-color: rgba(232, 232, 232, 0.7);
  border: 1px solid #b5b5b5;
  box-shadow: 1px 1px 3px rgba(0, 0, 0, 0.15);
}
.cube-face {
  display: block;
  margin-top: 21px;
  font-size: 14px;
  font-weight: bold;
  text-align: center;
  color: #96969a;
  font-family: "DejaVu Sans", sans-serif;
  transform: scaleX(0.85);
}
.axis-y, .axis-x, .axis-z {
  position: absolute;
  font-size: 14px;
  font-weight: bold;
}
.axis-y {
  left: 0;
  top: -18px;
  color: #a3e6a3;
}
.axis-x {
  right: -13px;
  top: 45px;
  color: #f49c9c;
}
.axis-z {
  left: -8px;
  top: 55px;
  color: #9a9af0;
}

/* sketch palette */
.palette {
  position: absolute;
  left: 1604px;
  top: 144px;
  width: 312px;
  height: 527px;
  background-color: #f0f0f0;
  border: 1px solid #bdbdbd;
  font-size: 13px;
  letter-spacing: 0.2px;
}
.palette-head {
  height: 29px;
  display: flex;
  align-items: center;
  padding: 0 6px 2px 2px;
  border-bottom: 1px solid #c8c8c8;
}
.palette-head .grip {
  margin-left: 0;
}
.palette-head .panel-toggle {
  margin-left: 8px;
}
.palette-head .panel-title {
  margin-left: 5px;
  letter-spacing: 0;
}
.palette-head .panel-arrows {
  margin-left: auto;
}
.palette-section {
  height: 38px;
  display: flex;
  align-items: center;
  padding-left: 6px;
  font-weight: bold;
  letter-spacing: 0.6px;
  color: #4a4a4a;
}
.section-arrow {
  width: 0;
  height: 0;
  margin-right: 5px;
  border-left: 5.5px solid transparent;
  border-right: 5.5px solid transparent;
  border-top: 8px solid #333;
}
.palette-row {
  height: 37.5px;
  display: flex;
  align-items: center;
  padding-left: 15px;
  color: #555;
}
.palette-row span {
  width: 191px;
  flex: none;
}
.check {
  width: 17px;
  height: 17px;
  flex: none;
  border: 2px solid #6f6f6f;
  border-radius: 4px;
  background-image: linear-gradient(#f2f2f2, #c8c8c8);
}
.check svg {
  width: 13px;
  height: 13px;
}
.ltype {
  width: 60px;
  height: 22px;
  flex: none;
}
.palette-foot {
  height: 45px;
  margin-top: 1px;
  display: flex;
  justify-content: flex-end;
  align-items: center;
  padding-right: 14px;
  border-top: 1px solid #c8c8c8;
}
.finish-btn {
  width: 103px;
  height: 25px;
  padding: 0;
  border: 1.5px solid #c9c9c9;
  background-color: #f0f0f0;
  font-family: inherit;
  font-size: 15px;
  color: #777;
}

.navbar {
  position: absolute;
  left: 811px;
  top: 761px;
  width: 296px;
  height: 30px;
  background-color: rgba(240, 240, 240, 0.92);
}

/* timeline */
.timeline {
  height: 60px;
  flex: none;
  display: flex;
  align-items: center;
  justify-content: space-between;
  padding-right: 16px;
  background-color: #f0f0f0;
  border-top: 2px solid #e6e6e6;
}
.timeline-strip {
  width: 420px;
  height: 60px;
  margin-top: -2px;
}
.gear {
  width: 21px;
  height: 21px;
}
```
